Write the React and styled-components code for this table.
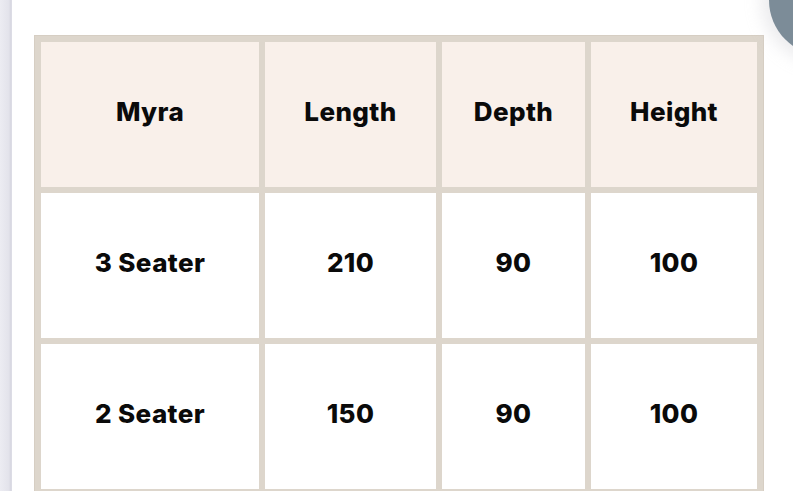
import React from 'react';
import styled, { createGlobalStyle } from 'styled-components';

const GlobalStyle = createGlobalStyle`
  html, body {
    margin: 0;
    padding: 0;
    background: #ffffff;
  }
  body {
    font-family: Inter, "Noto Sans", sans-serif;
    overflow: hidden;
  }
`;

const sizes = [
  { name: 'Myra', length: 'Length', depth: 'Depth', height: 'Height', head: true },
  { name: '3 Seater', length: '210', depth: '90', height: '100' },
  { name: '2 Seater', length: '150', depth: '90', height: '100' },
];

const App = () => {
  return (
    <Page>
      <GlobalStyle />
      <SideStrip />
      <Content>
        <SizeTable>
          <colgroup>
            <col style={{ width: 218 }} />
            <col style={{ width: 171 }} />
            <col style={{ width: 143 }} />
            <col style={{ width: 166 }} />
          </colgroup>
          <tbody>
            {sizes.map((row) => (
              <Row key={row.name}>
                <Cell $head={row.head}>{row.name}</Cell>
                <Cell $head={row.head}>{row.length}</Cell>
                <Cell $head={row.head}>{row.depth}</Cell>
                <Cell $head={row.head}>{row.height}</Cell>
              </Row>
            ))}
          </tbody>
        </SizeTable>
      </Content>
      <CornerBubble />
    </Page>
  );
};

export default App;

const Page = styled.div`
  position: relative;
  display: flex;
  width: 793px;
  height: 491px;
  overflow: hidden;
  background: #ffffff;
`;

const SideStrip = styled.div`
  flex: 0 0 11px;
  background: linear-gradient(90deg, #ececf2 0%, #e3e3eb 80%, #d6d6e0 100%);
  border-right: 1px solid #dcdce5;
`;

const Content = styled.div`
  flex: 1;
  padding: 35px 0 0 22px;
`;

const SizeTable = styled.table`
  width: 730px;
  table-layout: fixed;
  border-collapse: separate;
  border-spacing: 6px;
  background: #ddd6cc;
  border: 1px solid #d6cec3;
`;

const Row = styled.tr`
  height: 145px;
`;

const Cell = styled.td`
  padding: 0 0 6px;
  text-align: center;
  vertical-align: middle;
  background: ${(p) => (p.$head ? '#f9f0ea' : '#ffffff')};
  color: #0a0a0a;
  font-family: Inter, "Noto Sans", sans-serif;
  font-weight: 800;
  font-size: 26px;
  letter-spacing: 0.4px;
`;

const CornerBubble = styled.div`
  position: absolute;
  top: -56px;
  left: 769px;
  width: 112px;
  height: 112px;
  border-radius: 50%;
  background: #7c8c98;
  box-shadow: 0 0 16px 8px rgba(200, 200, 205, 0.35);
`;
